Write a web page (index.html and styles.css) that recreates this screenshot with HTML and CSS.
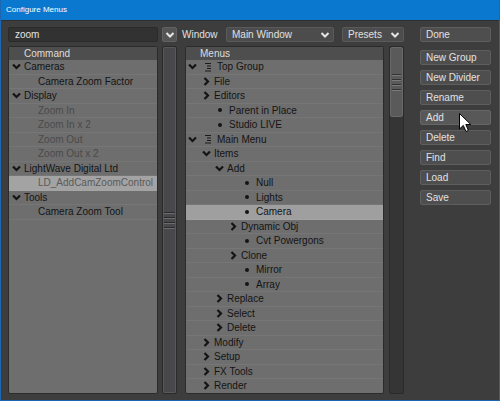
FILE: index.html
```html
<!DOCTYPE html>
<html>
<head>
<meta charset="utf-8">
<link rel="stylesheet" href="styles.css">
</head>
<body>
<div class="win">
  <div class="title">Configure Menus</div>
  <div class="content">
    <div class="toolbar">
      <div class="search">zoom</div>
      <div class="ddbtn"><svg class="dd-chev" viewBox="0 0 10 8" width="10" height="8"><polyline points="1.5,2 5,5.5 8.5,2"/></svg></div>
      <span class="label">Window</span>
      <div class="select w-main"><span>Main Window</span><svg class="dd-chev" viewBox="0 0 10 8" width="10" height="8"><polyline points="1.5,2 5,5.5 8.5,2"/></svg></div>
      <div class="select w-presets"><span>Presets</span><svg class="dd-chev" viewBox="0 0 10 8" width="10" height="8"><polyline points="1.5,2 5,5.5 8.5,2"/></svg></div>
      <div class="btn">Done</div>
    </div>
    <div class="main">
      <div class="panel left">
        <div class="phead">Command</div>
        <div class="row l0"><span class="mk"><svg class="chev" viewBox="0 0 9 9" width="9" height="9"><polyline points="1,2.5 4.5,6 8,2.5"/></svg></span>Cameras</div>
        <div class="row l1">Camera Zoom Factor</div>
        <div class="row l0"><span class="mk"><svg class="chev" viewBox="0 0 9 9" width="9" height="9"><polyline points="1,2.5 4.5,6 8,2.5"/></svg></span>Display</div>
        <div class="row l1 dis">Zoom In</div>
        <div class="row l1 dis">Zoom In x 2</div>
        <div class="row l1 dis">Zoom Out</div>
        <div class="row l1 dis">Zoom Out x 2</div>
        <div class="row l0"><span class="mk"><svg class="chev" viewBox="0 0 9 9" width="9" height="9"><polyline points="1,2.5 4.5,6 8,2.5"/></svg></span>LightWave Digital Ltd</div>
        <div class="row l1 sel dissel">LD_AddCamZoomControl</div>
        <div class="row l0"><span class="mk"><svg class="chev" viewBox="0 0 9 9" width="9" height="9"><polyline points="1,2.5 4.5,6 8,2.5"/></svg></span>Tools</div>
        <div class="row l1">Camera Zoom Tool</div>
      </div>
      <div class="sb full"><div class="grip"><i></i><i></i><i></i><i></i></div></div>
      <div class="panel menus">
        <div class="phead">Menus</div>
        <div class="row g0"><span class="mk"><svg class="chev" viewBox="0 0 9 9" width="9" height="9"><polyline points="1,2.5 4.5,6 8,2.5"/></svg></span><span class="ico"><svg viewBox="0 0 9 10" width="9" height="10"><path d="M2 1.5H8M4 4H8M4 6.5H8M2 9H8"/></svg></span>Top Group</div>
        <div class="row c17"><span class="mk"><svg class="chev r" viewBox="0 0 9 9" width="9" height="9"><polyline points="2.5,1 6,4.5 2.5,8"/></svg></span>File</div>
        <div class="row c17"><span class="mk"><svg class="chev r" viewBox="0 0 9 9" width="9" height="9"><polyline points="2.5,1 6,4.5 2.5,8"/></svg></span>Editors</div>
        <div class="row b33"><span class="bl"></span>Parent in Place</div>
        <div class="row b33"><span class="bl"></span>Studio LIVE</div>
        <div class="row g0"><span class="mk"><svg class="chev" viewBox="0 0 9 9" width="9" height="9"><polyline points="1,2.5 4.5,6 8,2.5"/></svg></span><span class="ico"><svg viewBox="0 0 9 10" width="9" height="10"><path d="M2 1.5H8M4 4H8M4 6.5H8M2 9H8"/></svg></span>Main Menu</div>
        <div class="row c17"><span class="mk"><svg class="chev" viewBox="0 0 9 9" width="9" height="9"><polyline points="1,2.5 4.5,6 8,2.5"/></svg></span>Items</div>
        <div class="row c31"><span class="mk"><svg class="chev" viewBox="0 0 9 9" width="9" height="9"><polyline points="1,2.5 4.5,6 8,2.5"/></svg></span>Add</div>
        <div class="row b60"><span class="bl"></span>Null</div>
        <div class="row b60"><span class="bl"></span>Lights</div>
        <div class="row b60 sel"><span class="bl"></span>Camera</div>
        <div class="row c44"><span class="mk"><svg class="chev r" viewBox="0 0 9 9" width="9" height="9"><polyline points="2.5,1 6,4.5 2.5,8"/></svg></span>Dynamic Obj</div>
        <div class="row b60"><span class="bl"></span>Cvt Powergons</div>
        <div class="row c44"><span class="mk"><svg class="chev r" viewBox="0 0 9 9" width="9" height="9"><polyline points="2.5,1 6,4.5 2.5,8"/></svg></span>Clone</div>
        <div class="row b60"><span class="bl"></span>Mirror</div>
        <div class="row b60"><span class="bl"></span>Array</div>
        <div class="row c31"><span class="mk"><svg class="chev r" viewBox="0 0 9 9" width="9" height="9"><polyline points="2.5,1 6,4.5 2.5,8"/></svg></span>Replace</div>
        <div class="row c31"><span class="mk"><svg class="chev r" viewBox="0 0 9 9" width="9" height="9"><polyline points="2.5,1 6,4.5 2.5,8"/></svg></span>Select</div>
        <div class="row c31"><span class="mk"><svg class="chev r" viewBox="0 0 9 9" width="9" height="9"><polyline points="2.5,1 6,4.5 2.5,8"/></svg></span>Delete</div>
        <div class="row c17"><span class="mk"><svg class="chev r" viewBox="0 0 9 9" width="9" height="9"><polyline points="2.5,1 6,4.5 2.5,8"/></svg></span>Modify</div>
        <div class="row c17"><span class="mk"><svg class="chev r" viewBox="0 0 9 9" width="9" height="9"><polyline points="2.5,1 6,4.5 2.5,8"/></svg></span>Setup</div>
        <div class="row c17"><span class="mk"><svg class="chev r" viewBox="0 0 9 9" width="9" height="9"><polyline points="2.5,1 6,4.5 2.5,8"/></svg></span>FX Tools</div>
        <div class="row c17"><span class="mk"><svg class="chev r" viewBox="0 0 9 9" width="9" height="9"><polyline points="2.5,1 6,4.5 2.5,8"/></svg></span>Render</div>
      </div>
      <div class="sb track"><div class="thumb"><div class="grip"><i></i><i></i><i></i><i></i></div></div></div>
      <div class="buttons">
        <div class="btn">New Group</div>
        <div class="btn">New Divider</div>
        <div class="btn">Rename</div>
        <div class="btn hover">Add</div>
        <div class="btn">Delete</div>
        <div class="btn">Find</div>
        <div class="btn">Load</div>
        <div class="btn">Save</div>
      </div>
    </div>
  </div>
  <svg class="cursor" viewBox="0 0 13 20" width="13" height="20"><path d="M0.5 0.5V16L4.3 12.4L7 18.5L9.4 17.4L6.8 11.5H11.8Z"/></svg>
</div>
</body>
</html>
```
FILE: styles.css
```css
* { box-sizing: border-box; }
html, body { margin: 0; padding: 0; background: #3d3d3d; }
body { font-family: "Liberation Sans", Arial, sans-serif; font-size: 10px; }

.win {
  position: relative;
  width: 500px;
  height: 401px;
  background: #3d3d3d;
  border: 1px solid #1a68b4;
  border-top: none;
  display: flex;
  flex-direction: column;
  overflow: hidden;
}
.title {
  height: 20px;
  margin: 0 -1px;
  background: #0b78d0;
  color: #fff;
  font-family: "Liberation Sans", Arial, sans-serif;
  font-size: 8px;
  line-height: 20px;
  padding-left: 6px;
  flex: none;
}
.content {
  flex: 1;
  border-top: 1px solid #2e2e2e;
  padding: 6px 0 0 7px;
  display: flex;
  flex-direction: column;
  gap: 4px;
}

.toolbar {
  display: flex;
  align-items: center;
  height: 15px;
  color: #dcdcdc;
}
.search {
  width: 150px;
  height: 15px;
  background: #323232;
  border: 1px solid #2a2a2a;
  border-radius: 2px;
  padding-left: 6px;
  line-height: 13px;
  color: #e2e2e2;
}
.ddbtn {
  width: 15px;
  height: 15px;
  margin-left: 4px;
  background: #555;
  border: 1px solid #626262;
  border-radius: 2px;
  display: flex;
  align-items: center;
  justify-content: center;
}
.dd-chev polyline { fill: none; stroke: #e6e6e6; stroke-width: 2; }
.label { width: 44px; margin-left: 5px; color: #e0e0e0; }
.select {
  height: 15px;
  background: #4c4c4c;
  border: 1px solid #5a5a5a;
  border-radius: 2px;
  display: flex;
  align-items: center;
  justify-content: space-between;
  padding: 0 3px 0 5px;
  color: #e0e0e0;
}
.w-main { width: 108px; }
.w-presets { width: 62px; margin-left: 8px; }

.btn {
  width: 71px;
  height: 15px;
  background: #4e4e4e;
  border: 1px solid #5e5e5e;
  border-radius: 2px;
  color: #e2e2e2;
  padding-left: 5px;
  line-height: 13px;
}
.toolbar .btn { margin-left: 16px; }
.btn.hover { background: #585858; border-color: #666; }

.main {
  display: flex;
  height: 348px;
}
.panel {
  background: #6e6e6e;
  border: 1px solid #2b2b2b;
  border-radius: 2px;
  overflow: hidden;
}
.panel.left { width: 150px; }
.panel.menus { width: 199px; margin-left: 8px; }
.phead {
  height: 13px;
  background: #4e4e4e;
  color: #dedede;
  line-height: 13px;
  padding-left: 15px;
}
.panel.menus .phead { padding-left: 14px; }
.row {
  height: 14.5px;
  border-bottom: 1px solid #767676;
  display: flex;
  align-items: center;
  color: #141414;
  white-space: nowrap;
}
.row.dis { color: #4a4a4a; }
.row.sel { background: #9f9f9f; border-bottom-color: #a4a4a4; }
.row.dissel { color: #5a5a5a; background: #a3a3a3; }

.mk { width: 12px; display: flex; align-items: center; flex: none; }
.chev polyline { fill: none; stroke: #141414; stroke-width: 2.2; }
.ico { width: 14px; display: flex; align-items: center; flex: none; }
.ico path { fill: none; stroke: #1a1a1a; stroke-width: 1; }
.bl { width: 11px; flex: none; display: flex; align-items: center; }
.bl::before {
  content: "";
  width: 4px;
  height: 4px;
  border-radius: 50%;
  background: #141414;
}

.left .l0 { padding-left: 3px; }
.left .l1 { padding-left: 29px; }
.g0 { padding-left: 2px; }
.g0 .mk { width: 15px; }
.c17 { padding-left: 16px; }
.c31 { padding-left: 29px; }
.c44 { padding-left: 43px; }
.b33 { padding-left: 32px; }
.b60 { padding-left: 59px; }

.sb {
  width: 15px;
  border: 1px solid #2a2a2a;
  border-radius: 2px;
  display: flex;
  flex-direction: column;
}
.sb.full {
  margin-left: 4px;
  background: #48484c;
  box-shadow: inset 0 0 0 1px #58585c;
  justify-content: center;
}
.sb.track {
  margin-left: 5px;
  background: #353535;
}
.thumb {
  height: 70px;
  background: #5a5a5a;
  border: 1px solid #6a6a6a;
  border-radius: 2px;
  display: flex;
  flex-direction: column;
  justify-content: center;
}
.grip {
  display: flex;
  flex-direction: column;
  gap: 3px;
  padding: 0 1px;
}
.grip i {
  display: block;
  height: 2px;
  border-top: 1px solid #2a2a2a;
  border-bottom: 1px solid #6c6c6c;
}
.thumb .grip i { border-top-color: #333; border-bottom-color: #7a7a7a; }

.buttons {
  margin-left: 16px;
  padding-top: 4px;
  display: flex;
  flex-direction: column;
  gap: 5px;
}

.cursor {
  position: absolute;
  left: 458px;
  top: 113px;
}
.cursor path { fill: #fff; stroke: #000; stroke-width: 1; stroke-linejoin: miter; }
```
